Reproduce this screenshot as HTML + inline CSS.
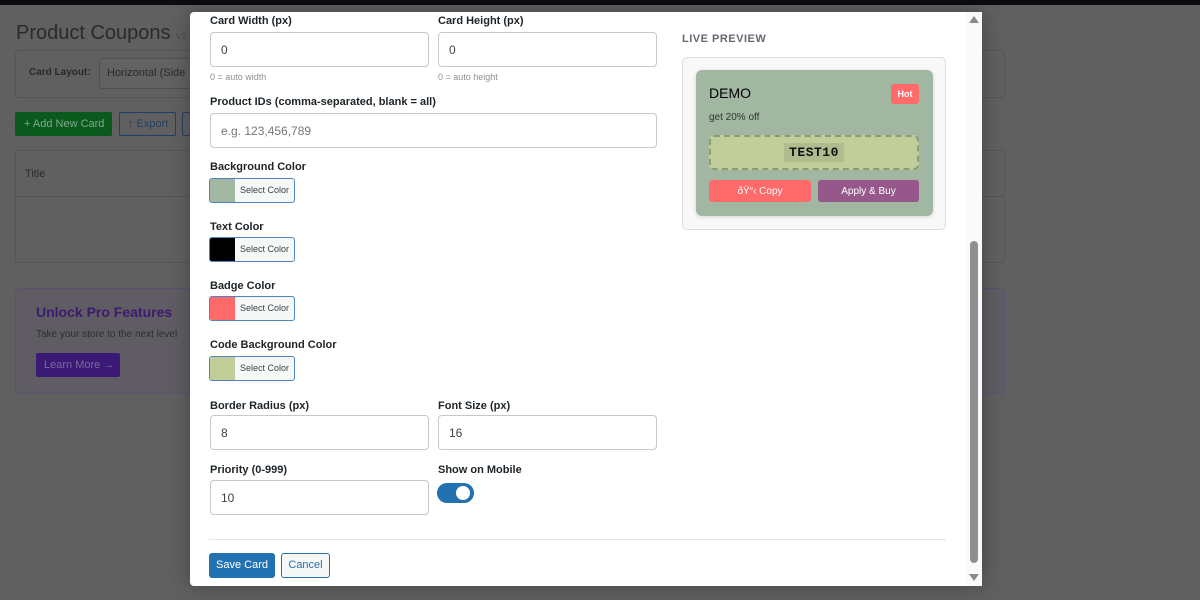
<!DOCTYPE html>
<html><head><meta charset="utf-8"><style>
*{box-sizing:border-box;margin:0;padding:0}
body{width:1200px;height:600px;overflow:hidden;background:#606060;font-family:"Liberation Sans",sans-serif;position:relative}
.a{position:absolute;white-space:nowrap}
.top{left:0;top:0;width:1200px;height:5px;background:#0b0c0f}
.lbl{position:absolute;font-size:11px;font-weight:bold;color:#1d2327}
.inp{position:absolute;background:#fff;border:1px solid #c8c8c8;border-radius:4px;font-size:12px;color:#3c434a;padding-left:10px;display:flex;align-items:center}
.hint{position:absolute;font-size:9px;color:#8c8f94}
.sw{position:absolute;width:86px;height:25px;border:1px solid #4f86bf;border-radius:3px;display:flex;overflow:hidden;background:#f6f7f7}
.sw i{width:25px;height:100%;display:block}
.sw span{font-size:9px;color:#3c434a;line-height:23px;padding-left:5px}
</style></head><body>
<div class="a top"></div>
<div class="a" style="left:16px;top:22px;font-size:20px;color:#2a2a2a">Product Coupons <span style="font-size:10px;color:#4a4a4a">v1.</span></div>
<div class="a" style="left:15px;top:50px;width:990px;height:48px;border:1px solid #555;border-radius:3px"></div>
<div class="a" style="left:29px;top:67px;font-size:10px;font-weight:bold;color:#2a2a2a">Card Layout:</div>
<div class="a" style="left:99px;top:58px;width:100px;height:31px;border:1px solid #505050;border-radius:3px;font-size:11px;color:#2a2a2a;padding:8px 7px;background:#626262">Horizontal (Side</div>
<div class="a" style="left:15px;top:112px;width:97px;height:24px;background:#0a5a1e;border-radius:2px;color:#7fa88a;font-size:11px;padding:6px 9px">+ Add New Card</div>
<div class="a" style="left:119px;top:112px;width:57px;height:24px;border:1px solid #20406a;border-radius:2px;color:#253f60;font-size:11px;padding:5px 8px">↑ Export</div>
<div class="a" style="left:182px;top:112px;width:10px;height:24px;border:1px solid #20406a;border-radius:2px"></div>
<div class="a" style="left:15px;top:150px;width:990px;height:113px;border:1px solid #555"></div>
<div class="a" style="left:15px;top:196px;width:990px;height:1px;background:#555"></div>
<div class="a" style="left:25px;top:168px;font-size:11px;color:#2a2a2a">Title</div>
<div class="a" style="left:15px;top:288px;width:990px;height:106px;border:1px solid #5a5270;border-radius:5px;background:#5f5d63"></div>
<div class="a" style="left:36px;top:304px;font-size:14px;font-weight:bold;color:#3c1a70">Unlock Pro Features</div>
<div class="a" style="left:36px;top:329px;font-size:10px;color:#2e2e2e">Take your store to the next level</div>
<div class="a" style="left:36px;top:353px;width:84px;height:24px;background:#3a1a75;border-radius:2px;color:#7a6a99;font-size:11px;padding:6px 8px">Learn More →</div>
<!-- modal -->
<div class="a" style="left:190px;top:12px;width:792px;height:574px;background:#fff;border-radius:4px 0 0 4px;box-shadow:0 0 20px rgba(0,0,0,.3)"></div>
<div class="a" style="left:966px;top:12px;width:16px;height:574px;background:#fafafa"></div>
<div class="a" style="left:970px;top:241px;width:8px;height:322px;background:#8f8f8f;border-radius:4px"></div>
<div class="a" style="left:969px;top:16px;width:0;height:0;border-left:5px solid transparent;border-right:5px solid transparent;border-bottom:7px solid #8a8a8a"></div>
<div class="a" style="left:969px;top:574px;width:0;height:0;border-left:5px solid transparent;border-right:5px solid transparent;border-top:7px solid #8a8a8a"></div>

<div class="lbl" style="left:210px;top:15px">Card Width (px)</div>
<div class="inp" style="left:210px;top:32px;width:219px;height:35px">0</div>
<div class="hint" style="left:210px;top:72px">0 = auto width</div>
<div class="lbl" style="left:438px;top:15px">Card Height (px)</div>
<div class="inp" style="left:438px;top:32px;width:219px;height:35px">0</div>
<div class="hint" style="left:438px;top:72px">0 = auto height</div>
<div class="lbl" style="left:210px;top:96px">Product IDs (comma-separated, blank = all)</div>
<div class="inp" style="left:210px;top:113px;width:447px;height:35px;color:#777">e.g. 123,456,789</div>
<div class="lbl" style="left:210px;top:161px">Background Color</div>
<div class="sw" style="left:209px;top:178px"><i style="background:#a1b7a2"></i><span>Select Color</span></div>
<div class="lbl" style="left:210px;top:221px">Text Color</div>
<div class="sw" style="left:209px;top:237px"><i style="background:#000"></i><span>Select Color</span></div>
<div class="lbl" style="left:210px;top:280px">Badge Color</div>
<div class="sw" style="left:209px;top:296px"><i style="background:#ff6b6b"></i><span>Select Color</span></div>
<div class="lbl" style="left:210px;top:339px">Code Background Color</div>
<div class="sw" style="left:209px;top:356px"><i style="background:#c1ce9a"></i><span>Select Color</span></div>
<div class="lbl" style="left:210px;top:400px">Border Radius (px)</div>
<div class="inp" style="left:210px;top:415px;width:219px;height:35px">8</div>
<div class="lbl" style="left:438px;top:400px">Font Size (px)</div>
<div class="inp" style="left:438px;top:415px;width:219px;height:35px">16</div>
<div class="lbl" style="left:210px;top:464px">Priority (0-999)</div>
<div class="inp" style="left:210px;top:480px;width:219px;height:35px">10</div>
<div class="lbl" style="left:438px;top:464px">Show on Mobile</div>
<div class="a" style="left:437px;top:483px;width:37px;height:20px;background:#2271b1;border-radius:10px"><div class="a" style="left:19px;top:3px;width:14px;height:14px;background:#fff;border-radius:50%"></div></div>
<div class="a" style="left:209px;top:539px;width:737px;height:1px;background:#e5e5e5"></div>
<div class="a" style="left:209px;top:553px;width:66px;height:25px;background:#2271b1;border-radius:3px;color:#fff;font-size:11px;text-align:center;line-height:25px">Save Card</div>
<div class="a" style="left:281px;top:553px;width:49px;height:25px;border:1px solid #2271b1;border-radius:3px;color:#2271b1;font-size:11px;text-align:center;line-height:23px;background:#f6f7f7">Cancel</div>

<div class="a" style="left:682px;top:33px;font-size:11px;font-weight:bold;color:#646970;letter-spacing:.5px">LIVE PREVIEW</div>
<div class="a" style="left:682px;top:57px;width:264px;height:173px;border:1px solid #ddd;border-radius:5px;background:#f8f8f8"></div>
<div class="a" style="left:696px;top:70px;width:237px;height:146px;background:#a1b7a2;border-radius:6px;box-shadow:0 1px 4px rgba(0,0,0,.15)"></div>
<div class="a" style="left:709px;top:85px;font-size:14px;color:#000">DEMO</div>
<div class="a" style="left:891px;top:84px;width:28px;height:20px;background:#ff6b6b;border-radius:3px;color:#fff;font-size:9px;font-weight:bold;text-align:center;line-height:20px">Hot</div>
<div class="a" style="left:709px;top:112px;font-size:10px;color:#333">get 20% off</div>
<div class="a" style="left:709px;top:135px;width:210px;height:35px;background:#c1ce9a;border:2px dashed #8a9b78;border-radius:5px"></div>
<div class="a" style="left:784px;top:143px;width:60px;height:19px;background:#aebc8e;font-family:'Liberation Mono',monospace;font-weight:bold;font-size:13px;text-align:center;line-height:19px;color:#111;letter-spacing:.5px">TEST10</div>
<div class="a" style="left:709px;top:180px;width:102px;height:22px;background:#ff6b6b;border-radius:3px;color:#fff;font-size:10px;text-align:center;line-height:23px">ðŸ“‹ Copy</div>
<div class="a" style="left:818px;top:180px;width:101px;height:22px;background:#96588a;border-radius:3px;color:#fff;font-size:10px;text-align:center;line-height:23px">Apply &amp; Buy</div>
</body></html>
